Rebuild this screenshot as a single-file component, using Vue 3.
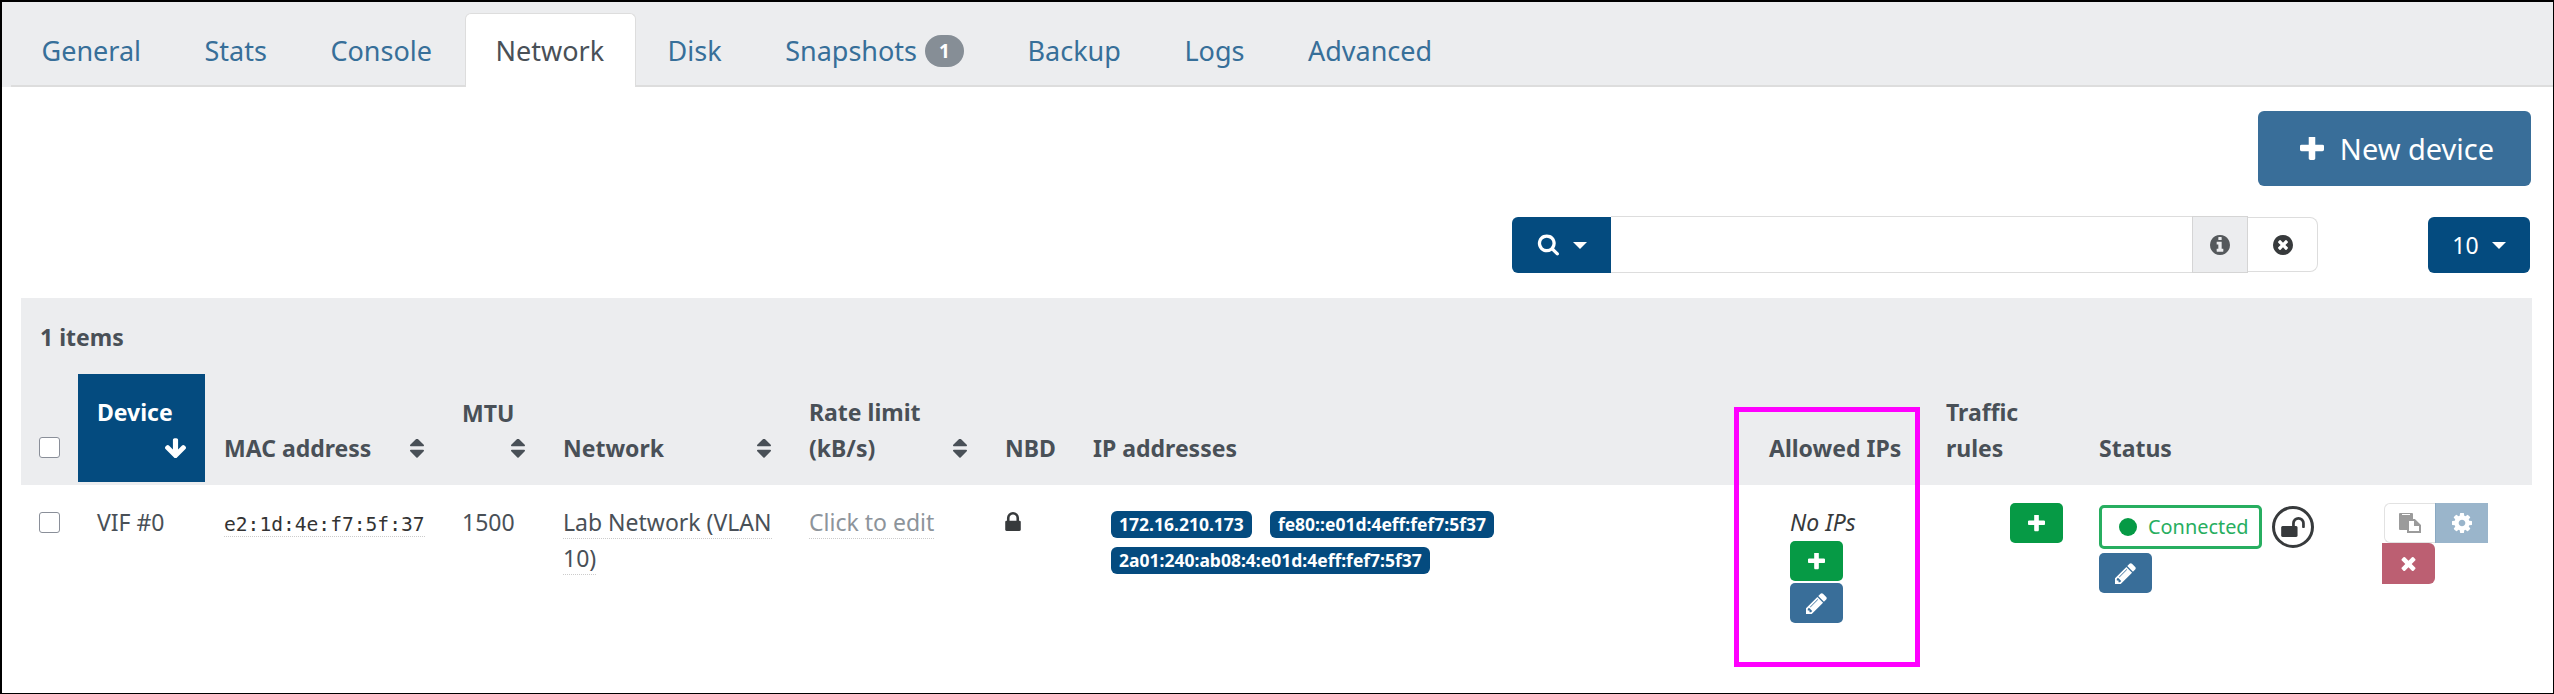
<script setup>
const p = {
  plus: 'M1600 736v192q0 40-28 68t-68 28h-416v416q0 40-28 68t-68 28h-192q-40 0-68-28t-28-68v-416h-416q-40 0-68-28t-28-68v-192q0-40 28-68t68-28h416v-416q0-40 28-68t68-28h192q40 0 68 28t28 68v416h416q40 0 68 28t28 68z',
  pencil: 'M491 1536l91-91-235-235-91 91v107h128v128h107zm523-928q0-22-22-22-10 0-17 7l-542 542q-7 7-7 17 0 22 22 22 10 0 17-7l542-542q7-7 7-17zm-54-192l416 416-832 832h-416v-416zm683 96q0 53-37 90l-166 166-416-416 166-165q36-38 90-38 53 0 91 38l235 234q37 39 37 91z',
  search: 'M1216 832q0-185-131.5-316.5t-316.5-131.5-316.5 131.5-131.5 316.5 131.5 316.5 316.5 131.5 316.5-131.5 131.5-316.5zm512 832q0 52-38 90t-90 38q-54 0-90-38l-343-342q-179 124-399 124-143 0-273.5-55.5t-225-150-150-225-55.5-273.5 55.5-273.5 150-225 225-150 273.5-55.5 273.5 55.5 225 150 150 225 55.5 273.5q0 220-124 399l343 343q37 37 37 90z',
  times: 'M1490 1322q0 40-28 68l-136 136q-28 28-68 28t-68-28l-294-294-294 294q-28 28-68 28t-68-28l-136-136q-28-28-28-68t28-68l294-294-294-294q-28-28-28-68t28-68l136-136q28-28 68-28t68 28l294 294 294-294q28-28 68-28t68 28l136 136q28 28 28 68t-28 68l-294 294 294 294q28 28 28 68z',
  lock: 'M640 768h512v-192q0-106-75-181t-181-75-181 75-75 181v192zm832 96v576q0 40-28 68t-68 28h-960q-40 0-68-28t-28-68v-576q0-40 28-68t68-28h32v-192q0-184 132-316t316-132 316 132 132 316v192h32q40 0 68 28t28 68z',
  unlock: 'M1728 576v256q0 26-19 45t-45 19h-64q-26 0-45-19t-19-45v-256q0-106-75-181t-181-75-181 75-75 181v192h96q40 0 68 28t28 68v576q0 40-28 68t-68 28h-960q-40 0-68-28t-28-68v-576q0-40 28-68t68-28h672v-192q0-185 131.5-316.5t316.5-131.5 316.5 131.5 131.5 316.5z',
  info: 'M1152 1376v-160q0-14-9-23t-23-9h-96v-512q0-14-9-23t-23-9h-320q-14 0-23 9t-9 23v160q0 14 9 23t23 9h96v320h-96q-14 0-23 9t-9 23v160q0 14 9 23t23 9h448q14 0 23-9t9-23zm-128-896v-160q0-14-9-23t-23-9h-192q-14 0-23 9t-9 23v160q0 14 9 23t23 9h192q14 0 23-9t9-23zm640 416q0 209-103 385.5t-279.5 279.5-385.5 103-385.5-103-279.5-279.5-103-385.5 103-385.5 279.5-279.5 385.5-103 385.5 103 279.5 279.5 103 385.5z',
  timesCircle: 'M1277 1122q0-26-19-45l-181-181 181-181q19-19 19-45 0-27-19-46l-90-90q-19-19-46-19-26 0-45 19l-181 181-181-181q-19-19-45-19-27 0-46 19l-90 90q-19 19-19 46 0 26 19 45l181 181-181 181q-19 19-19 45 0 27 19 46l90 90q19 19 46 19 26 0 45-19l181-181 181 181q19 19 45 19 27 0 46-19l90-90q19-19 19-46zm387-226q0 209-103 385.5t-279.5 279.5-385.5 103-385.5-103-279.5-279.5-103-385.5 103-385.5 279.5-279.5 385.5-103 385.5 103 279.5 279.5 103 385.5z',
  cog: 'M1152 896q0-106-75-181t-181-75-181 75-75 181 75 181 181 75 181-75 75-181zm512-109v222q0 12-8 23t-20 13l-185 28q-19 54-39 91 35 50 107 138 10 12 10 25t-9 23q-27 37-99 108t-94 71q-12 0-26-9l-138-108q-44 23-91 38-16 136-29 186-7 28-36 28h-222q-14 0-24.5-8.5t-11.5-21.5l-28-184q-49-16-90-37l-141 107q-10 9-25 9-14 0-25-11-126-114-165-168-7-10-7-23 0-12 8-23 15-21 51-66.5t54-70.5q-27-50-41-99l-183-27q-13-2-21-12.5t-8-23.5v-222q0-12 8-23t19-13l186-28q14-46 39-92-40-57-107-138-10-12-10-24 0-10 9-23 26-36 98.5-107.5t94.5-71.5q13 0 26 10l138 107q44-23 91-38 16-136 29-186 7-28 36-28h222q14 0 24.5 8.5t11.5 21.5l28 184q49 16 90 37l142-107q9-9 24-9 13 0 25 10 129 119 165 170 7 8 7 22 0 12-8 23-15 21-51 66.5t-54 70.5q26 50 41 98l183 28q13 2 21 12.5t8 23.5z',
  arrow: 'M1675 832q0 53-37 90l-651 652q-39 37-91 37-53 0-90-37l-651-652q-38-36-38-90 0-53 38-91l74-75q39-37 91-37 53 0 90 37l294 294v-704q0-52 38-90t90-38h128q52 0 90 38t38 90v704l294-294q37-37 90-37 52 0 91 37l75 75q37 39 37 91z',
  sort: 'M1408 1088q0 26-19 45l-448 448q-19 19-45 19t-45-19l-448-448q-19-19-19-45t19-45 45-19h896q26 0 45 19t19 45zm0-384q0 26-19 45t-45 19h-896q-26 0-45-19t-19-45 19-45l448-448q19-19 45-19t45 19l448 448q19 19 19 45z'
}
const tabs = ['General', 'Stats', 'Console', 'Network', 'Disk', 'Snapshots', 'Backup', 'Logs', 'Advanced']
const widths = [57, 127, 238, 101, 246, 196, 88, 676, 177, 153, 283, 169]
const ips = ['172.16.210.173', 'fe80::e01d:4eff:fef7:5f37', '2a01:240:ab08:4:e01d:4eff:fef7:5f37']
</script>

<template>
  <div class="frame">
    <nav class="tabs">
      <a v-for="t in tabs" :key="t" class="tab" :class="{ active: t === 'Network' }">
        {{ t }}<span v-if="t === 'Snapshots'" class="pill">1</span>
      </a>
    </nav>

    <main class="main">
      <div class="row-new">
        <button class="new-btn">
          <svg class="ic-new" viewBox="192 192 1408 1408"><path :d="p.plus" /></svg>
          New device
        </button>
      </div>

      <div class="row-search">
        <div class="search">
          <button class="search-btn">
            <svg class="ic-search" viewBox="0 128 1728 1664"><path :d="p.search" /></svg>
            <i class="caret"></i>
          </button>
          <input class="search-input" type="text" />
          <span class="addon">
            <svg class="ic-circle" viewBox="128 128 1536 1536"><path :d="p.info" /></svg>
          </span>
          <button class="clear">
            <svg class="ic-circle" viewBox="128 128 1536 1536"><path :d="p.timesCircle" /></svg>
          </button>
        </div>
        <button class="size-btn">10<i class="caret"></i></button>
      </div>

      <table class="grid">
        <colgroup>
          <col v-for="(w, i) in widths" :key="i" :style="{ width: w + 'px' }" />
        </colgroup>
        <thead>
          <tr>
            <th class="items" colspan="12">1 items</th>
          </tr>
          <tr class="heads">
            <th class="cb-cell"><input class="cb" type="checkbox" /></th>
            <th class="sorted">
              Device
              <svg class="ic-arrow" viewBox="117 128 1558 1446"><path :d="p.arrow" /></svg>
            </th>
            <th>
              <div class="th-flex">
                <span>MAC address</span>
                <svg class="ic-sort" viewBox="384 256 1024 1344"><path :d="p.sort" /></svg>
              </div>
            </th>
            <th>
              MTU
              <svg class="ic-sort block" viewBox="384 256 1024 1344"><path :d="p.sort" /></svg>
            </th>
            <th>
              <div class="th-flex">
                <span>Network</span>
                <svg class="ic-sort" viewBox="384 256 1024 1344"><path :d="p.sort" /></svg>
              </div>
            </th>
            <th>
              <div class="th-flex">
                <span>Rate limit<br />(kB/s)</span>
                <svg class="ic-sort" viewBox="384 256 1024 1344"><path :d="p.sort" /></svg>
              </div>
            </th>
            <th>NBD</th>
            <th>IP addresses</th>
            <th>Allowed IPs</th>
            <th>Traffic<br />rules</th>
            <th>Status</th>
            <th></th>
          </tr>
        </thead>
        <tbody>
          <tr>
            <td class="cb-cell body"><input class="cb" type="checkbox" /></td>
            <td>VIF #0</td>
            <td><code class="dotted">e2:1d:4e:f7:5f:37</code></td>
            <td>1500</td>
            <td class="net"><span class="dotted">Lab Network (VLAN 10)</span></td>
            <td><span class="dotted muted">Click to edit</span></td>
            <td class="nbd">
              <svg class="ic-lock" viewBox="320 128 1152 1408"><path :d="p.lock" /></svg>
            </td>
            <td>
              <div class="ip-list">
                <span v-for="ip in ips" :key="ip" class="ip">{{ ip }}</span>
              </div>
            </td>
            <td class="allowed">
              <em class="no-ips">No IPs</em>
              <button class="sq green">
                <svg class="ic-plus" viewBox="192 192 1408 1408"><path :d="p.plus" /></svg>
              </button>
              <button class="sq blue">
                <svg class="ic-pencil" viewBox="128 128 1536 1536"><path :d="p.pencil" /></svg>
              </button>
            </td>
            <td class="traffic">
              <button class="sq green">
                <svg class="ic-plus" viewBox="192 192 1408 1408"><path :d="p.plus" /></svg>
              </button>
            </td>
            <td class="status">
              <div class="status-top">
                <span class="connected"><i class="dot"></i>Connected</span>
                <span class="lock-ring">
                  <svg class="ic-unlock" viewBox="64 128 1664 1408"><path :d="p.unlock" /></svg>
                </span>
              </div>
              <button class="sq blue">
                <svg class="ic-pencil" viewBox="128 128 1536 1536"><path :d="p.pencil" /></svg>
              </button>
            </td>
            <td class="actions">
              <div class="act-top">
                <button class="act copy">
                  <svg class="ic-copy" viewBox="0 0 22 20">
                    <path fill="#9b9b9b" d="M1 0h12a1 1 0 0 1 1 1v5H9a1 1 0 0 0-1 1v10H1a1 1 0 0 1-1-1V1a1 1 0 0 1 1-1z" />
                    <rect x="3" y="1" width="8" height="1" fill="#fff" />
                    <path fill="#fff" stroke="#9b9b9b" stroke-width="2" d="M9 7h6.500l5.500 5.500V19H9z" />
                    <path fill="#9b9b9b" d="M15 7v6h6z" />
                  </svg>
                </button>
                <button class="act gear">
                  <svg class="ic-cog" viewBox="128 128 1536 1536"><path :d="p.cog" /></svg>
                </button>
              </div>
              <button class="act del">
                <svg class="ic-times" viewBox="280 280 1232 1274"><path :d="p.times" /></svg>
              </button>
            </td>
          </tr>
        </tbody>
      </table>
    </main>

    <div class="highlight"></div>
  </div>
</template>

<style>
html, body { margin: 0; background: #fff; }
</style>

<style scoped>
.frame {
  position: relative;
  box-sizing: border-box;
  width: 2554px;
  height: 694px;
  overflow: hidden;
  background: #fff;
  border: solid #000;
  border-width: 2px 1px 1px 2px;
  font-family: "Noto Sans", "Open Sans", sans-serif;
  font-size: 23px;
  line-height: 36px;
  color: #495057;
}
svg { display: block; fill: currentColor; }
button { font-family: inherit; border: 0; padding: 0; margin: 0; cursor: pointer; }

/* tabs */
.tabs {
  display: flex;
  box-sizing: border-box;
  height: 85px;
  padding: 11px 0 0 9px;
  background-color: #ecedef;
  background-image: linear-gradient(#ddd, #ddd);
  background-size: calc(100% - 9px) 2px;
  background-position: right bottom;
  background-repeat: no-repeat;
}
.tab {
  display: flex;
  align-items: center;
  box-sizing: border-box;
  height: 74px;
  padding: 1px 31px 0 29.5px;
  margin-right: 1px;
  font-size: 27px;
  color: #376f99;
  border: 1px solid transparent;
  border-bottom: 0;
  border-radius: 6px 6px 0 0;
}
.tab.active {
  background: #fff;
  color: #495057;
  border-color: #ddd;
}
.pill {
  display: inline-flex;
  align-items: center;
  justify-content: center;
  width: 39px;
  height: 32px;
  margin-left: 8px;
  border-radius: 16px;
  background: #868e96;
  color: #fff;
  font-size: 19px;
  font-weight: 700;
  line-height: 1;
}

/* main */
.main { padding: 24px 21px 0 19px; }
.row-new { display: flex; justify-content: flex-end; }
.new-btn {
  display: flex;
  align-items: center;
  justify-content: center;
  gap: 16px;
  box-sizing: border-box;
  width: 273px;
  height: 75px;
  padding-left: 5px;
  margin-right: 1px;
  border-radius: 6px;
  background: #396e99;
  color: #fff;
  font-size: 29px;
}
.ic-new { width: 24px; height: 24px; }

.row-search {
  display: flex;
  justify-content: flex-end;
  gap: 110px;
  margin-top: 31px;
  padding-right: 2px;
}
.search { display: flex; height: 56px; }
.search-btn {
  display: flex;
  align-items: center;
  gap: 14px;
  box-sizing: border-box;
  width: 99px;
  height: 56px;
  padding-left: 25px;
  border-radius: 6px 0 0 6px;
  background: #044b7f;
  color: #fff;
}
.ic-search { width: 22px; height: 22px; }
.caret {
  display: block;
  width: 0;
  height: 0;
  border-left: 7px solid transparent;
  border-right: 7px solid transparent;
  border-top: 7px solid currentColor;
}
.search-input {
  box-sizing: border-box;
  width: 581px;
  height: 57px;
  margin-top: -1px;
  border: solid #ddd;
  border-width: 1px 0;
  outline: 0;
  background: #fff;
}
.addon {
  display: flex;
  align-items: center;
  justify-content: center;
  box-sizing: border-box;
  width: 56px;
  height: 57px;
  margin-top: -1px;
  background: #ecedef;
  border: 1px solid #d5d5d5;
  color: #55595c;
}
.clear {
  display: flex;
  align-items: center;
  justify-content: center;
  box-sizing: border-box;
  width: 70px;
  height: 55px;
  background: #fff;
  border: 1px solid #ddd;
  border-left: 0;
  border-radius: 0 8px 8px 0;
  color: #373a3c;
}
.ic-circle { width: 20px; height: 20px; }
.size-btn {
  display: flex;
  align-items: center;
  justify-content: center;
  gap: 13px;
  width: 102px;
  height: 56px;
  border-radius: 6px;
  background: #044b7f;
  color: #fff;
  font-size: 23px;
}

/* table */
.grid {
  width: 2511px;
  margin-top: 25px;
  border-collapse: collapse;
  table-layout: fixed;
}
.grid th {
  box-sizing: border-box;
  padding: 20px 19px 16px;
  border-bottom: 3px solid #ecedef;
  background: #ecedef;
  background-clip: padding-box;
  vertical-align: bottom;
  text-align: left;
  font-weight: 700;
}
.grid th.items { padding: 21px 19px 19px; border-bottom: 0; }
.grid th.sorted { background: #044b7f; color: #fff; }
.grid td { padding: 19px 19px 0; vertical-align: top; }
.grid td.net { padding-right: 8px; }
.grid th.cb-cell, .grid td.cb-cell { padding-left: 18px; padding-right: 0; }
.cb {
  appearance: none;
  display: block;
  box-sizing: border-box;
  width: 21px;
  height: 21px;
  margin: 0 0 8px;
  background: #fff;
  border: 1px solid #8a8f99;
  border-radius: 3px;
}
.grid td.body .cb { margin-top: 8px; }
.th-flex { display: flex; align-items: flex-end; justify-content: space-between; }
.ic-sort { flex: none; width: 14px; height: 19px; margin-bottom: 8px; color: #495057; }
.ic-sort.block { margin: 8px 0 8px auto; }
.ic-arrow { width: 21px; height: 20px; margin: 8px 0 8px auto; }
.dotted { border-bottom: 1px dotted #ccc; }
code {
  font-family: "DejaVu Sans Mono", "Liberation Mono", monospace;
  font-size: 19.6px;
  color: #333;
}
.muted { color: #8d949b; }
.ic-lock { width: 16px; height: 19px; margin-top: 8px; color: #373a3c; }
.ip-list { display: flex; flex-wrap: wrap; gap: 9px 18px; padding: 7px 0 0 18px; }
.ip {
  box-sizing: border-box;
  height: 27px;
  padding: 0 8px;
  border-radius: 6px;
  background: #044b7f;
  color: #fff;
  font-size: 17.5px;
  font-weight: 700;
  line-height: 27px;
  white-space: nowrap;
}
.grid td.allowed { padding-left: 40px; padding-top: 19px; }
.no-ips { display: block; height: 37px; color: #373a3c; }
.sq {
  display: flex;
  align-items: center;
  justify-content: center;
  width: 53px;
  height: 40px;
  border-radius: 5px;
  color: #fff;
}
.allowed .sq + .sq { margin-top: 2px; }
.green { background: #069a45; }
.blue { background: #396e99; }
.ic-plus { width: 17px; height: 17px; }
.ic-pencil { width: 21px; height: 21px; }
.grid td.traffic { padding: 18px 0 0 83px; }
.grid td.status { padding: 20px 0 0 19px; }
.status-top { display: flex; gap: 10px; margin-bottom: 4px; }
.connected {
  display: flex;
  align-items: center;
  box-sizing: border-box;
  width: 163px;
  height: 44px;
  padding-left: 17px;
  border: 3px solid #27ae60;
  border-radius: 5px;
  color: #27ae60;
  font-size: 19.9px;
}
.dot {
  display: block;
  width: 18px;
  height: 18px;
  margin-right: 11px;
  border-radius: 50%;
  background: #069a45;
}
.lock-ring {
  display: flex;
  align-items: center;
  justify-content: center;
  box-sizing: border-box;
  width: 42px;
  height: 42px;
  margin-top: 1px;
  border: 3px solid #373a3c;
  border-radius: 50%;
  color: #373a3c;
}
.ic-unlock { width: 24px; height: 20px; }
.grid td.actions { padding: 18px 0 0 19px; }
.act-top { display: flex; margin-left: 2px; }
.act {
  display: flex;
  align-items: center;
  justify-content: center;
  height: 40px;
  color: #fff;
}
.copy {
  box-sizing: border-box;
  width: 51px;
  background: #fff;
  border: 1px solid #e2e2e2;
  border-right: 0;
  border-radius: 6px 0 0 6px;
}
.ic-copy { width: 22px; height: 20px; }
.gear {
  box-sizing: border-box;
  width: 53px;
  background: #9ab5cb;
  border-left: 1px solid #8aa9c2;
}
.ic-cog { width: 20px; height: 20px; }
.del {
  width: 53px;
  height: 41px;
  background: #bc5f72;
  border-radius: 0 6px 6px 0;
}
.ic-times { width: 15px; height: 15px; }

.highlight {
  position: absolute;
  left: 1732px;
  top: 405px;
  box-sizing: border-box;
  width: 186px;
  height: 260px;
  border: 5px solid #ff00ff;
  pointer-events: none;
}
</style>
